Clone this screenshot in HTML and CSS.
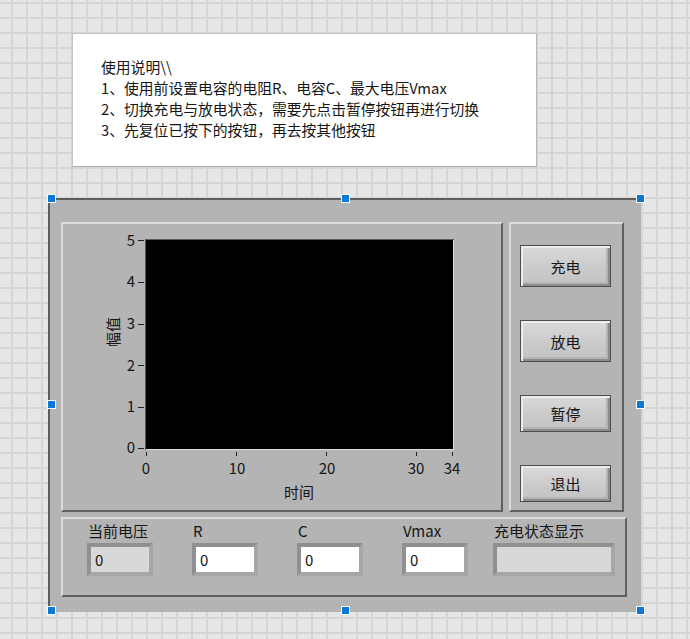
FILE: index.html
```html
<!DOCTYPE html>
<html lang="zh">
<head>
<meta charset="utf-8">
<title>充放电</title>
<link rel="stylesheet" href="styles.css">
</head>
<body>
<div class="canvas">
  <div class="note">
    <p>使用说明\\</p>
    <p>1、使用前设置电容的电阻R、电容C、最大电压Vmax</p>
    <p>2、切换充电与放电状态，需要先点击暂停按钮再进行切换</p>
    <p>3、先复位已按下的按钮，再去按其他按钮</p>
  </div>

  <div class="panel">
    <div class="top-row">
      <div class="frame graph-frame">
        <svg class="chart" width="438" height="286" viewBox="0 0 438 286">
          <rect x="83" y="16" width="307" height="209" fill="#000"/>
          <line x1="82.5" y1="15" x2="82.5" y2="226" stroke="#5a5a5a"/>
          <line x1="82" y1="15.5" x2="391" y2="15.5" stroke="#5a5a5a"/>
          <line x1="83" y1="225.5" x2="391" y2="225.5" stroke="#dcdcdc"/>
          <line x1="390.5" y1="16" x2="390.5" y2="226" stroke="#dcdcdc"/>
          <g stroke="#222" stroke-width="1">
            <line x1="75" y1="16.5" x2="81" y2="16.5"/>
            <line x1="75" y1="58.5" x2="81" y2="58.5"/>
            <line x1="75" y1="100.5" x2="81" y2="100.5"/>
            <line x1="75" y1="141.5" x2="81" y2="141.5"/>
            <line x1="75" y1="183.5" x2="81" y2="183.5"/>
            <line x1="75" y1="224.5" x2="81" y2="224.5"/>
            <line x1="83.5" y1="228" x2="83.5" y2="232"/>
            <line x1="173.5" y1="228" x2="173.5" y2="232"/>
            <line x1="263.5" y1="228" x2="263.5" y2="232"/>
            <line x1="353.5" y1="228" x2="353.5" y2="232"/>
            <line x1="389.5" y1="228" x2="389.5" y2="232"/>
          </g>
          <g class="axis-text" text-anchor="end">
            <text x="72" y="22">5</text>
            <text x="72" y="63">4</text>
            <text x="72" y="105">3</text>
            <text x="72" y="147">2</text>
            <text x="72" y="188">1</text>
            <text x="72" y="229">0</text>
          </g>
          <g class="axis-text" text-anchor="middle">
            <text x="83" y="250">0</text>
            <text x="174" y="250">10</text>
            <text x="264" y="250">20</text>
            <text x="353" y="250">30</text>
            <text x="389" y="250">34</text>
            <text x="236" y="274">时间</text>
            <text x="50" y="113.5" transform="rotate(-90 50 108)">幅值</text>
          </g>
        </svg>
      </div>
      <div class="frame btn-frame">
        <div class="btn btn-tall">充电</div>
        <div class="btn btn-tall">放电</div>
        <div class="btn btn-short">暂停</div>
        <div class="btn btn-short">退出</div>
      </div>
    </div>

    <div class="frame field-frame">
      <div class="field-col">
        <div class="flabel">当前电压</div>
        <div class="field field-ind">0</div>
      </div>
      <div class="field-col">
        <div class="flabel">R</div>
        <div class="field">0</div>
      </div>
      <div class="field-col">
        <div class="flabel">C</div>
        <div class="field">0</div>
      </div>
      <div class="field-col col-narrow">
        <div class="flabel">Vmax</div>
        <div class="field">0</div>
      </div>
      <div class="field-col">
        <div class="flabel">充电状态显示</div>
        <div class="field field-ind field-wide"></div>
      </div>
    </div>

    <span class="handle h-tl"></span>
    <span class="handle h-tm"></span>
    <span class="handle h-tr"></span>
    <span class="handle h-ml"></span>
    <span class="handle h-mr"></span>
    <span class="handle h-bl"></span>
    <span class="handle h-bm"></span>
    <span class="handle h-br"></span>
  </div>
</div>
</body>
</html>
```

FILE: styles.css
```css
html, body {
  margin: 0;
  padding: 0;
}

body {
  width: 690px;
  height: 639px;
  overflow: hidden;
  font-family: "Noto Sans CJK SC", "Noto Sans", sans-serif;
  font-size: 15px;
  color: #161616;
  background-color: #e6e6e6;
  background-image:
    linear-gradient(to right, #d5d5d5 2px, transparent 2px),
    linear-gradient(to bottom, #d5d5d5 2px, transparent 2px);
  background-size: 15px 15px;
  background-position: 11px 2px;
}

.canvas {
  padding-top: 33px;
}

.note {
  box-sizing: border-box;
  margin-left: 72px;
  width: 465px;
  height: 134px;
  background: #ffffff;
  border: 1px solid #c4c4c4;
  border-bottom-color: #b0b0b0;
  border-right-color: #b8b8b8;
  padding: 22px 0 0 28px;
  font-size: 14.8px;
}

.note p {
  margin: 0;
  line-height: 21px;
  white-space: nowrap;
}

.panel {
  position: relative;
  box-sizing: border-box;
  margin-top: 31px;
  margin-left: 48px;
  width: 593px;
  height: 414px;
  background: #b4b4b4;
  border-top: 2px solid #5e5e5e;
  border-left: 2px solid #5e5e5e;
  padding: 22px 0 0 11px;
}

.top-row {
  display: flex;
  gap: 6px;
}

.frame {
  box-sizing: border-box;
  border: 2px solid;
  border-color: #dcdcdc #606060 #606060 #dcdcdc;
}

.graph-frame {
  width: 442px;
  height: 290px;
}

.chart {
  display: block;
}

.axis-text {
  font-family: "Noto Sans CJK SC", "Noto Sans", sans-serif;
  font-size: 15px;
  fill: #161616;
}

.btn-frame {
  width: 115px;
  height: 290px;
  display: flex;
  flex-direction: column;
  align-items: flex-start;
  padding: 21px 0 0 9px;
  gap: 33px;
}

.btn {
  box-sizing: border-box;
  width: 91px;
  border: 1px solid #4c4c4c;
  background: linear-gradient(to bottom, #dadada, #c9c9c9 60%, #c3c3c3);
  box-shadow:
    inset 2px 2px 0 #ededed,
    inset -2px -2px 0 #8c8c8c,
    inset -4px -4px 0 #b3b3b3;
  display: flex;
  align-items: center;
  justify-content: center;
  font-size: 15px;
  color: #161616;
}

.btn-tall {
  height: 42px;
}

.btn-short {
  height: 37px;
}

.field-frame {
  margin-top: 5px;
  width: 566px;
  height: 80px;
  display: flex;
  padding: 0 0 0 24px;
}

.field-col {
  width: 105px;
  display: flex;
  flex-direction: column;
}

.col-narrow {
  width: 91px;
}

.flabel {
  padding-left: 1px;
  margin-top: 2px;
  line-height: 20px;
  height: 20px;
  white-space: nowrap;
}

.field {
  box-sizing: border-box;
  margin-top: 2px;
  width: 66px;
  height: 33px;
  border: 4px solid;
  border-color: #909090 #a6a6a6 #a6a6a6 #909090;
  background: #ffffff;
  padding-left: 4px;
  line-height: 25px;
  font-size: 15px;
  color: #161616;
}

.field-ind {
  background: #d8d8d8;
}

.field-wide {
  width: 122px;
}

.handle {
  position: absolute;
  box-sizing: border-box;
  width: 9px;
  height: 9px;
  background: #0a78d6;
  border: 1px solid #ffffff;
}

.h-tl { left: -3px; top: -6px; }
.h-tm { left: 291px; top: -6px; }
.h-tr { left: 586px; top: -6px; }
.h-ml { left: -3px; top: 200px; }
.h-mr { left: 586px; top: 200px; }
.h-bl { left: -3px; top: 406px; }
.h-bm { left: 291px; top: 406px; }
.h-br { left: 586px; top: 406px; }
```
